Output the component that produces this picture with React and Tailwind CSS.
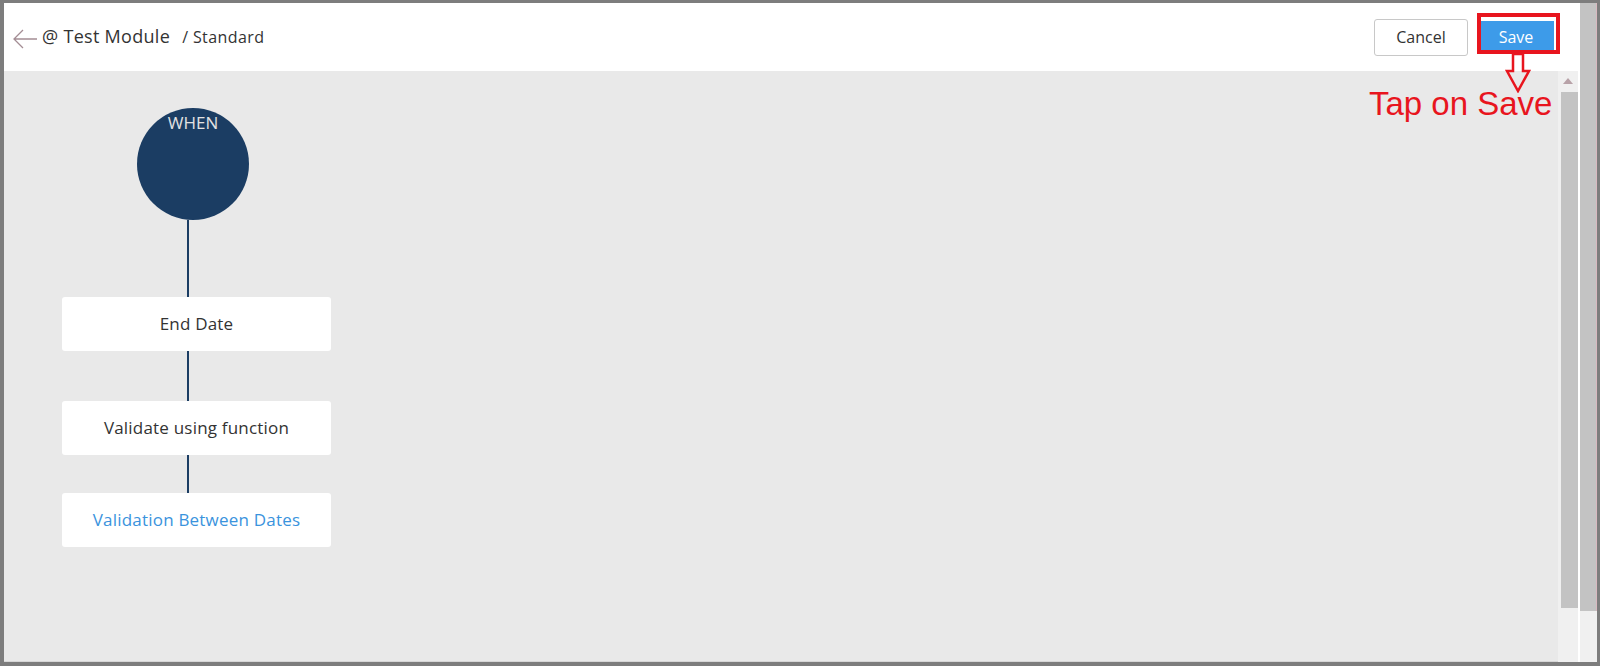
import React from "react";

const font = { fontFamily: '"Open Sans", "Liberation Sans", sans-serif' };

function Node({ children, blue }) {
  return (
    <div
      className={`w-[269px] h-[54px] bg-white rounded-[3px] flex items-center justify-center text-[17px] tracking-[0.2px] ${blue ? "text-[#3a93dd]" : "text-[#333333]"}`}
    >
      {children}
    </div>
  );
}

function VLine({ h }) {
  return <div className={`ml-[125px] w-[2px] bg-[#1b3d63] ${h}`} />;
}

export default function App() {
  return (
    <div
      className="relative w-[1600px] h-[666px] bg-[#7d7d7d] pt-[3px] pl-[4px] pr-[3px] pb-[4px] overflow-hidden"
      style={font}
    >
      <div className="flex w-full h-full">
        {/* main */}
        <div className="flex flex-col flex-1 min-w-0">
          {/* header */}
          <div className="h-[68px] bg-white flex items-center pl-[8px] pr-[20px] shrink-0">
            <svg width="26" height="22" viewBox="0 0 26 22" className="mr-[4px] mt-[3px]">
              <path d="M25 11H2M11 2L2 11L11 20" fill="none" stroke="#a48d94" strokeWidth="1.3" />
            </svg>
            <span className="text-[18px] tracking-[0.3px] text-[#333333] -mt-[1px]">@ Test Module</span>
            <span className="text-[16px] tracking-[0.4px] text-[#333333] ml-[12px] -mt-[1px]">/ Standard</span>
            <div className="flex-1" />
            <button className="w-[94px] h-[37px] border border-[#c8c8c8] rounded-[3px] bg-white text-[16px] text-[#333333] mr-[10px]">
              Cancel
            </button>
            <button className="w-[76px] h-[33px] bg-[#3d9be9] text-white text-[16px] font-medium mr-[4px]">
              Save
            </button>
          </div>
          {/* body */}
          <div className="flex flex-1 min-h-0">
            <div className="flex-1 bg-[#e9e9e9] border-b border-[#d6d6d6] pl-[58px] pt-[37px] flex flex-col items-start">
              <div className="ml-[75px] w-[112px] h-[112px] rounded-full bg-[#1b3d63] flex justify-center pt-[4px]">
                <span className="text-[17px] text-[#e2e2e2] leading-[22px]">WHEN</span>
              </div>
              <VLine h="h-[77px]" />
              <Node>End Date</Node>
              <VLine h="h-[50px]" />
              <Node>Validate using function</Node>
              <VLine h="h-[38px]" />
              <Node blue>Validation Between Dates</Node>
            </div>
            {/* inner scrollbar */}
            <div className="w-[20px] bg-[#f0f0f0] flex flex-col items-center pt-[7px]">
              <svg width="10" height="6" viewBox="0 0 10 6">
                <path d="M5 0L10 6H0Z" fill="#b8a2a8" />
              </svg>
              <div className="mt-[8px] ml-[2px] w-[17px] h-[516px] bg-[#c3c3c3]" />
            </div>
          </div>
        </div>
        <div className="w-[2px] bg-white" />
        {/* outer scrollbar */}
        <div className="w-[17px] flex flex-col">
          <div className="h-[608px] bg-[#c3c3c3] border-r border-[#d9b9c0]" />
          <div className="flex-1 bg-[#f0f0f0]" />
        </div>
      </div>

      {/* annotation overlay */}
      <div className="absolute left-[1477px] top-[13px] w-[83px] h-[41px] border-[4px] border-[#e8151e]" />
      <svg className="absolute left-[1504px] top-[53px]" width="28" height="40" viewBox="0 0 28 40">
        <path d="M9 1V18H3L14 38L25 18H19V1Z" fill="none" stroke="#e8151e" strokeWidth="2.5" strokeLinejoin="miter" />
      </svg>
      <div
        className="absolute left-[1369px] top-[83px] text-[33px] text-[#e8151e] leading-[42px] whitespace-nowrap"
        style={{ fontFamily: '"Liberation Sans", Arial, sans-serif' }}
      >
        Tap on Save
      </div>
    </div>
  );
}
